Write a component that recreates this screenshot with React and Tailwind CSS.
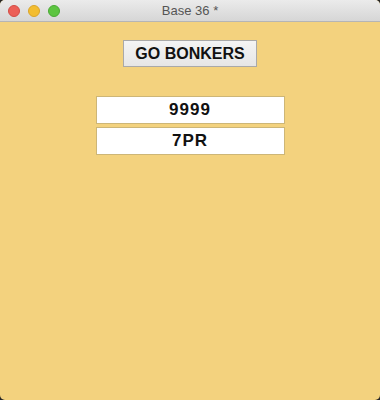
import React from 'react';

const Light = ({ color, ring }) => (
  <span className={`w-3 h-3 rounded-full border ${color} ${ring}`} />
);

const Field = ({ value }) => (
  <div className="w-[189px] h-7 bg-white border border-[#cdb677] flex items-center justify-center text-[17px] font-bold text-[#111] tracking-[0.06em]">
    {value}
  </div>
);

export default function App() {
  return (
    <div className="w-[380px] h-[400px] bg-[#262626] font-['Liberation_Sans',Arial,sans-serif]">
      <div className="w-full h-full rounded-[5px] overflow-hidden flex flex-col bg-[#f3d27e]">
        <div className="h-[22px] shrink-0 relative flex items-center bg-gradient-to-b from-[#ebebeb] to-[#d6d6d6] border-b border-[#b5b5b5]">
          <div className="flex items-center gap-[8px] pl-[8px] pt-[1px]">
            <Light color="bg-[#ec5f57]" ring="border-[#d24c45]" />
            <Light color="bg-[#f3bd30]" ring="border-[#d9a42a]" />
            <Light color="bg-[#5dc541]" ring="border-[#4aa935]" />
          </div>
          <div className="absolute inset-0 flex items-center justify-center text-[13px] text-[#555] pt-[1px]">
            Base 36 *
          </div>
        </div>
        <div className="flex flex-col items-center pt-[18px]">
          <button className="w-[134px] h-[27px] bg-gradient-to-b from-[#f4f4f4] to-[#e6e6e6] border border-[#a9a9a9] text-[16px] font-bold text-[#111] leading-none">
            GO BONKERS
          </button>
          <div className="flex flex-col gap-[3px] mt-[29px]">
            <Field value="9999" />
            <Field value="7PR" />
          </div>
        </div>
      </div>
    </div>
  );
}
